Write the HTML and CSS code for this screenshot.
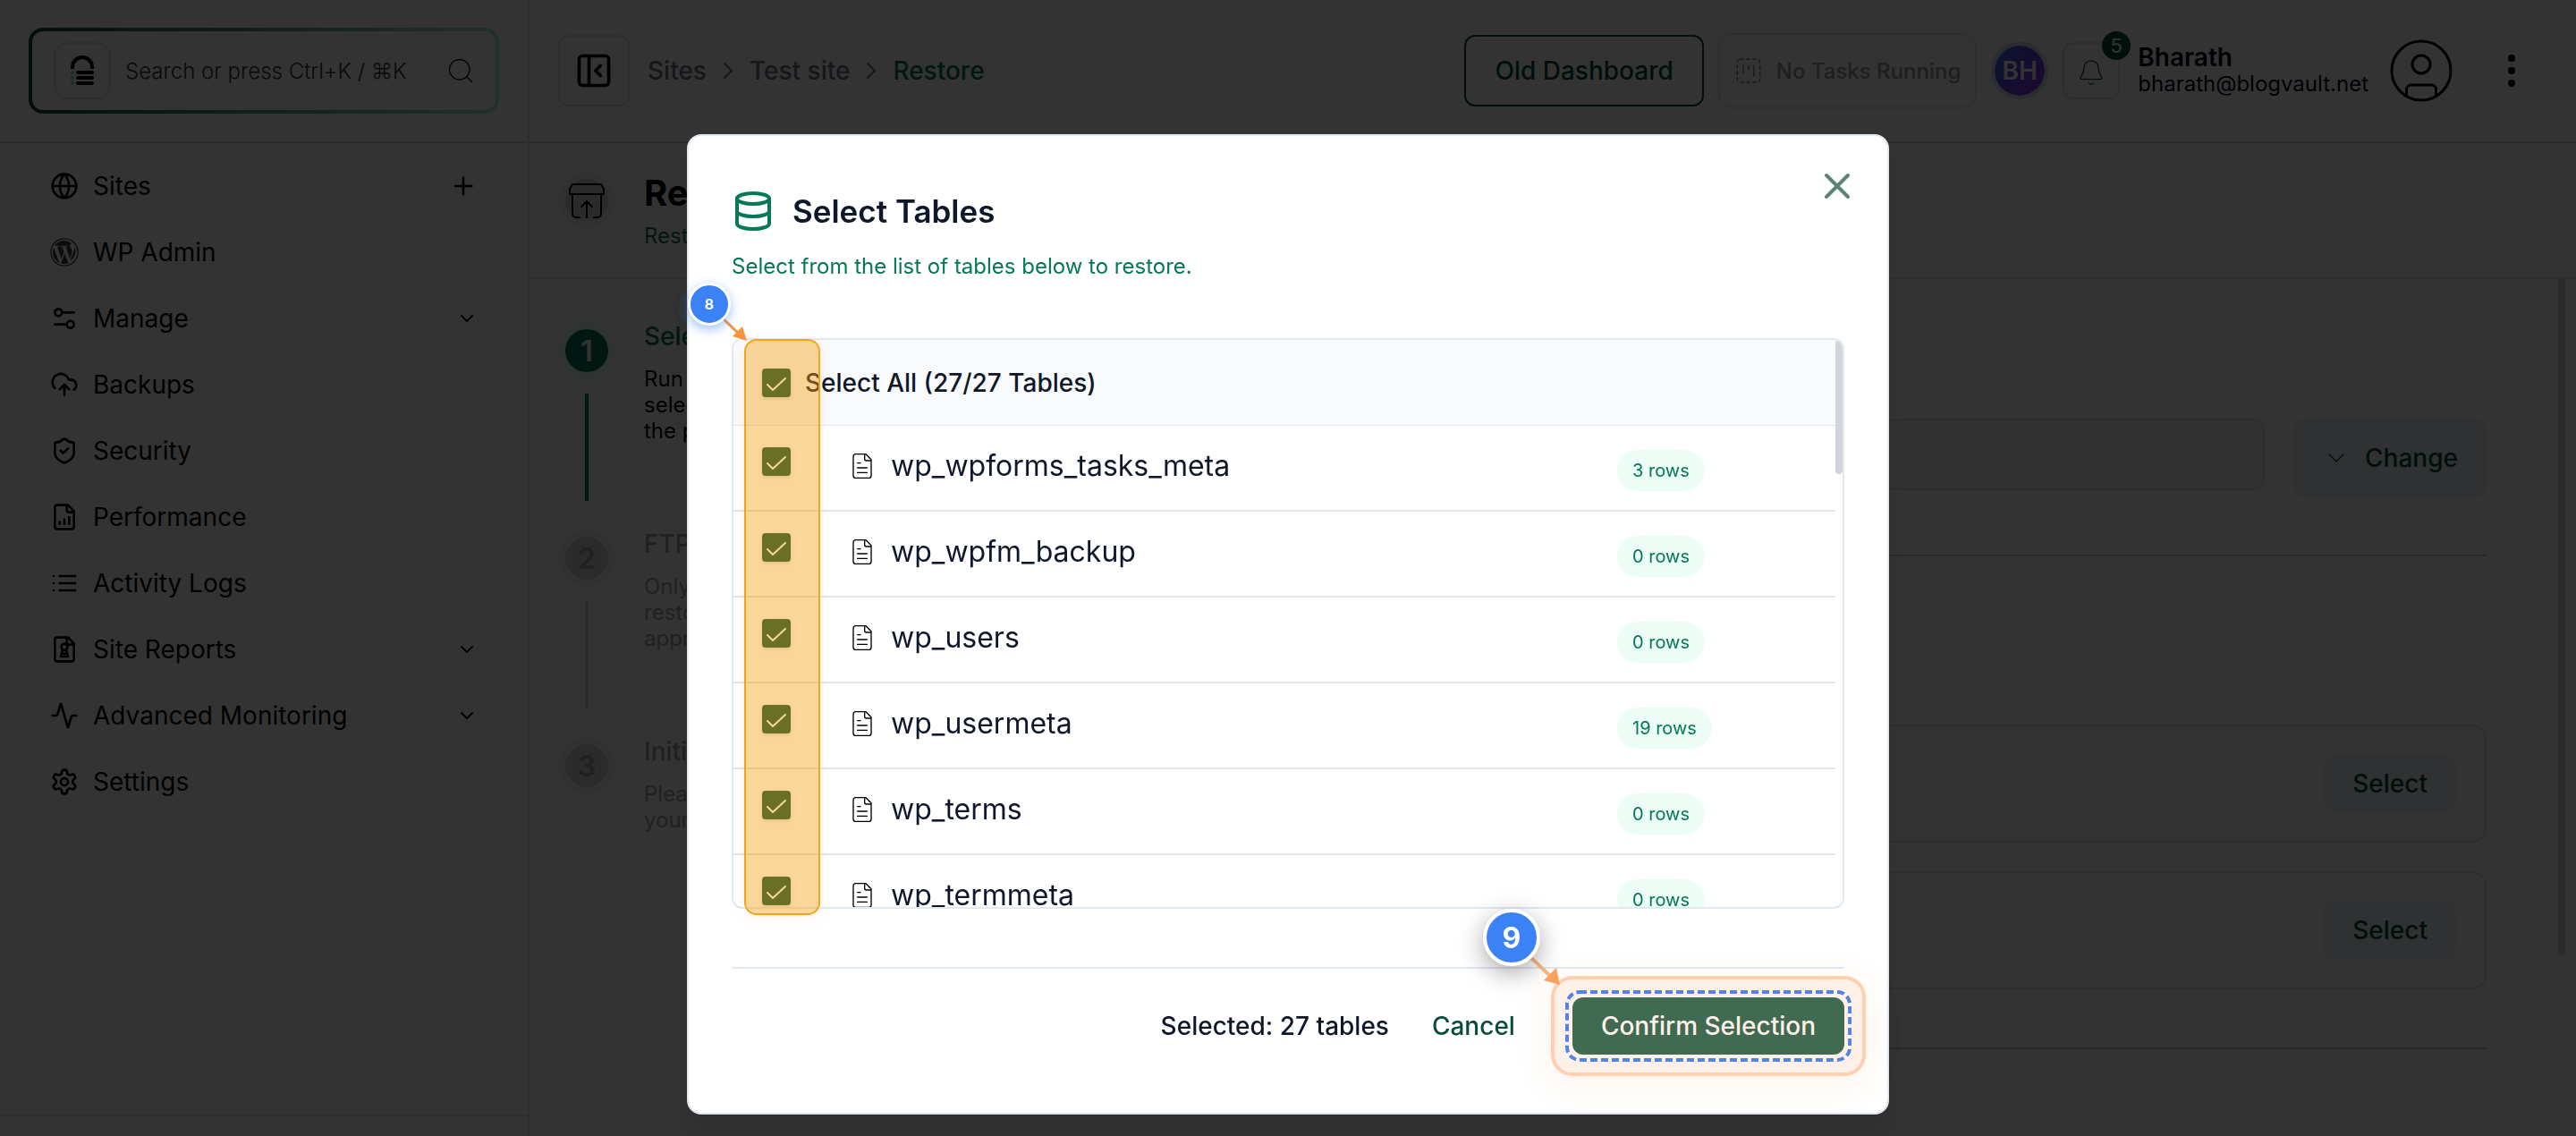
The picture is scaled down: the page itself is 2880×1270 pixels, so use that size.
FILE: index.html
```html
<!DOCTYPE html>
<html lang="en">
<head>
    <meta charset="UTF-8">
    <meta name="viewport" content="width=device-width, initial-scale=1.0">
    <title>Restore - Test site</title>
    <link rel="stylesheet" href="styles.css">
</head>
<body>

<!-- shared icons -->
<svg class="sprite" aria-hidden="true">
    <symbol id="i-down" viewBox="0 0 24 24"><path d="M6 9l6 6 6-6"/></symbol>
    <symbol id="i-right" viewBox="0 0 14 24"><path d="M3 4l8 8-8 8"/></symbol>
    <symbol id="i-file" viewBox="0 0 24 24"><path d="M15 2H6.500a2 2 0 0 0-2 2v16a2 2 0 0 0 2 2h11a2 2 0 0 0 2-2V6.500L15 2zM14 2v4a1.500 1.500 0 0 0 1.500 1.500h4M8 9.500h2.500M8 13.500h8M8 17.500h8"/></symbol>
</svg>

<div class="app">
    <aside class="sidebar">
        <div class="sidebar-top">
            <div class="search">
                <span class="search-logo">
                    <svg width="28" height="34" viewBox="0 0 28 34">
                        <path d="M3 15v-2a11 11 0 0 1 22 0v2" fill="none" stroke="#000" stroke-width="4"/>
                        <path d="M9 19h16M9 25h16M9 31h16" stroke="#000" stroke-width="4" stroke-linecap="round"/>
                        <path d="M3 19h0M3 25h0M3 31h0" stroke="#6ee7b7" stroke-width="4" stroke-linecap="round"/>
                    </svg>
                </span>
                <input type="text" class="search-input" aria-label="Search" placeholder="Search or press Ctrl+K / ⌘K">
                <svg class="icon search-icon" viewBox="0 0 24 24"><circle cx="11" cy="11" r="9"/><path d="M17.500 17.500L22 22"/></svg>
            </div>
        </div>
        <nav class="nav">
            <a href="#" class="nav-item">
                <svg class="icon" viewBox="0 0 24 24"><circle cx="12" cy="12" r="10"/><path d="M2 12h20M12 2a15 15 0 0 1 0 20a15 15 0 0 1 0-20"/></svg>
                <span>Sites</span>
                <svg class="icon nav-end" viewBox="0 0 24 24"><path d="M5 12h14M12 5v14"/></svg>
            </a>
            <a href="#" class="nav-item">
                <svg class="icon wp" viewBox="0 0 24 24"><circle cx="12" cy="12" r="11.300" fill="none" stroke="#404040" stroke-width="1"/><path fill="#404040" stroke="none" d="M12 2.200a9.800 9.800 0 0 0-8.200 4.400h.6c1 0 2.600-.1 2.600-.1.600 0 .6.700.1.800 0 0-.5.100-1.100.1l3.500 10.400 2.100-6.300-1.500-4.100c-.5 0-1-.1-1-.1-.5 0-.5-.8 0-.8 0 0 1.600.1 2.500.1 1 0 2.600-.1 2.600-.1.500 0 .6.700.1.800 0 0-.6.100-1.100.1l3.500 10.300 1-3.200c.4-1.300.7-2.300.7-3.100 0-1.200-.4-2-.8-2.700-.5-.8-1-1.500-1-2.300 0-.9.700-1.700 1.600-1.700A9.800 9.800 0 0 0 12 2.200zM2.200 12a9.800 9.800 0 0 0 5.500 8.800L3.100 8a9.800 9.800 0 0 0-.9 4zM12.200 12.900L9.200 21.400a9.800 9.800 0 0 0 6-.2zM20.600 7.300c0 1-.2 2-.7 3.300l-3 8.700A9.800 9.800 0 0 0 20.600 7.300z"/></svg>
                <span>WP Admin</span>
            </a>
            <a href="#" class="nav-item">
                <svg class="icon" viewBox="0 0 24 24"><circle cx="7" cy="7" r="3"/><path d="M10 7h10M4 17h10"/><circle cx="17" cy="17" r="3"/></svg>
                <span>Manage</span>
                <svg class="icon nav-end chevron"><use href="#i-down"/></svg>
            </a>
            <a href="#" class="nav-item">
                <svg class="icon" viewBox="0 0 24 24"><path d="M4 14.900A7 7 0 1 1 15.700 8h1.800a4.500 4.500 0 0 1 2.500 8.200M12 12v9M8 16l4-4 4 4"/></svg>
                <span>Backups</span>
            </a>
            <a href="#" class="nav-item">
                <svg class="icon" viewBox="0 0 24 24"><path d="M20 13c0 5-3.500 7.500-7.700 9a1 1 0 0 1-.6 0C7.500 20.500 4 18 4 13V6a1 1 0 0 1 1-1c2 0 4.500-1.200 6.200-2.700a1.200 1.200 0 0 1 1.600 0C14.500 3.800 17 5 19 5a1 1 0 0 1 1 1zM9 12l2 2 4-4"/></svg>
                <span>Security</span>
            </a>
            <a href="#" class="nav-item">
                <svg class="icon" viewBox="0 0 24 24"><path d="M15 2H6a2 2 0 0 0-2 2v16a2 2 0 0 0 2 2h12a2 2 0 0 0 2-2V7zM14 2v4a2 2 0 0 0 2 2h4M8 18v-2M12 18v-4M16 18v-6"/></svg>
                <span>Performance</span>
            </a>
            <a href="#" class="nav-item">
                <svg class="icon" viewBox="0 0 24 24"><path d="M8 6h13M8 12h13M8 18h13M3 6h.01M3 12h.01M3 18h.01"/></svg>
                <span>Activity Logs</span>
            </a>
            <a href="#" class="nav-item">
                <svg class="icon" viewBox="0 0 24 24"><path d="M15 2H6a2 2 0 0 0-2 2v16a2 2 0 0 0 2 2h12a2 2 0 0 0 2-2V7zM14 2v4a2 2 0 0 0 2 2h4"/><circle cx="12" cy="10" r="2.600"/><path d="M10.500 12.500L9 18h6l-1.500-5.500M10 15.500h4"/></svg>
                <span>Site Reports</span>
                <svg class="icon nav-end chevron"><use href="#i-down"/></svg>
            </a>
            <a href="#" class="nav-item">
                <svg class="icon" viewBox="0 0 24 24"><path d="M22 12h-2.500a2 2 0 0 0-1.900 1.500l-2.400 8.300a.25.25 0 0 1-.4 0L9.200 2.200a.25.25 0 0 0-.4 0l-2.400 8.300A2 2 0 0 1 4.500 12H2"/></svg>
                <span>Advanced Monitoring</span>
                <svg class="icon nav-end chevron"><use href="#i-down"/></svg>
            </a>
            <a href="#" class="nav-item">
                <svg class="icon" viewBox="0 0 24 24"><path d="M12.220 2h-.44a2 2 0 0 0-2 2v.18a2 2 0 0 1-1 1.730l-.43.25a2 2 0 0 1-2 0l-.15-.08a2 2 0 0 0-2.730.73l-.22.38a2 2 0 0 0 .73 2.730l.15.1a2 2 0 0 1 1 1.720v.51a2 2 0 0 1-1 1.740l-.15.09a2 2 0 0 0-.73 2.730l.22.38a2 2 0 0 0 2.730.73l.15-.08a2 2 0 0 1 2 0l.43.25a2 2 0 0 1 1 1.730V20a2 2 0 0 0 2 2h.44a2 2 0 0 0 2-2v-.18a2 2 0 0 1 1-1.730l.43-.25a2 2 0 0 1 2 0l.15.08a2 2 0 0 0 2.730-.73l.22-.39a2 2 0 0 0-.73-2.730l-.15-.08a2 2 0 0 1-1-1.740v-.5a2 2 0 0 1 1-1.740l.15-.09a2 2 0 0 0 .73-2.730l-.22-.38a2 2 0 0 0-2.730-.73l-.15.08a2 2 0 0 1-2 0l-.43-.25a2 2 0 0 1-1-1.730V4a2 2 0 0 0-2-2z"/><circle cx="12" cy="12" r="3"/></svg>
                <span>Settings</span>
            </a>
        </nav>
        <div class="sidebar-foot"></div>
    </aside>

    <main class="main">
        <header class="topbar">
            <button type="button" class="toggle" aria-label="Collapse sidebar">
                <svg class="icon" viewBox="0 0 24 24"><rect x="3" y="3" width="18" height="18" rx="2"/><path d="M9 3v18M16 15l-3-3 3-3"/></svg>
            </button>
            <nav class="crumbs">
                <a href="#">Sites</a>
                <svg class="icon"><use href="#i-right"/></svg>
                <a href="#">Test site</a>
                <svg class="icon"><use href="#i-right"/></svg>
                <a href="#" class="current">Restore</a>
            </nav>
            <button type="button" class="btn-outline">Old Dashboard</button>
            <div class="tasks">
                <svg class="icon" viewBox="0 0 24 24"><rect x="1" y="1" width="22" height="22" rx="3" stroke-dasharray="3 3"/><path d="M7 7v7M12 7v4M17 7v10"/></svg>
                <span>No Tasks Running</span>
            </div>
            <span class="initials">BH</span>
            <button type="button" class="bell" aria-label="Notifications">
                <svg class="icon" viewBox="0 0 24 24"><path d="M12 1.500c-4 0-6.500 3-6.500 7 0 5-3 6.500-3 8.500 0 .6.400 1 1 1h17c.6 0 1-.4 1-1 0-2-3-3.500-3-8.500 0-4-2.500-7-6.500-7zM10 21.500a2.500 2.500 0 0 0 4 0"/></svg>
                <span class="bell-count">5</span>
            </button>
            <div class="user">
                <strong>Bharath</strong>
                <span>bharath@blogvault.net</span>
            </div>
            <svg class="avatar" viewBox="0 0 70 70"><circle cx="35" cy="35" r="33"/><circle cx="35" cy="28" r="10"/><path d="M18.500 63v-7a5 5 0 0 1 5-5h23a5 5 0 0 1 5 5v7"/></svg>
            <button type="button" class="dots" aria-label="More">
                <svg width="8" height="36" viewBox="0 0 8 36"><circle cx="4" cy="4" r="4"/><circle cx="4" cy="18" r="4"/><circle cx="4" cy="32" r="4"/></svg>
            </button>
        </header>

        <section class="page-head">
            <span class="step-dot head-dot">
                <svg class="icon" viewBox="0 0 44 44"><path d="M6 4h32l3 5v6H3V9zM6 15v22a4 4 0 0 0 4 4h4M38 15v22a4 4 0 0 1-4 4h-4M22 41V23M16 29l6-6 6 6"/></svg>
            </span>
            <div>
                <h1>Restore</h1>
                <p>Restore your site</p>
            </div>
        </section>

        <div class="content">
            <ol class="steps">
                <li class="step active">
                    <span class="step-dot">1</span>
                    <div>
                        <h3>Select Tables</h3>
                        <p>Run a restore on<br>selected tables in<br>the process</p>
                    </div>
                </li>
                <li class="step">
                    <span class="step-dot">2</span>
                    <div>
                        <h3>FTP Details</h3>
                        <p>Only needed to<br>restore with the<br>appropriate access</p>
                    </div>
                </li>
                <li class="step">
                    <span class="step-dot">3</span>
                    <div>
                        <h3>Initiate Restore</h3>
                        <p>Please confirm<br>your choices</p>
                    </div>
                </li>
            </ol>
            <div class="panel">
                <div class="field-row">
                    <input type="text" class="field" aria-label="Restore point">
                    <button type="button" class="btn-soft btn-change"><svg class="icon"><use href="#i-down"/></svg>Change</button>
                </div>
                <div class="panel-cards">
                    <div class="card"><button type="button" class="btn-soft">Select</button></div>
                    <div class="card"><button type="button" class="btn-soft">Select</button></div>
                </div>
            </div>
            <div class="page-scroll"></div>
        </div>
    </main>
</div>

<div class="overlay">
    <div class="modal" role="dialog" aria-labelledby="modalTitle">
        <button type="button" class="close" aria-label="Close">
            <svg class="icon" viewBox="0 0 24 24"><path d="M6 6l12 12M18 6L6 18"/></svg>
        </button>
        <div class="modal-head">
            <svg class="icon" viewBox="0 0 24 24"><ellipse cx="12" cy="5" rx="9" ry="3"/><path d="M3 5v14a9 3 0 0 0 18 0V5M3 12a9 3 0 0 0 18 0"/></svg>
            <h2 id="modalTitle">Select Tables</h2>
        </div>
        <p class="modal-sub">Select from the list of tables below to restore.</p>

        <div class="list-wrap">
            <div class="list">
                <table>
                    <thead>
                        <tr>
                            <th class="check"><input type="checkbox" id="all" checked></th>
                            <th class="all" colspan="2"><label for="all">Select All (27/27 Tables)</label></th>
                        </tr>
                    </thead>
                    <tbody>
                        <tr>
                            <td class="check"><input type="checkbox" id="t1" checked></td>
                            <td><label for="t1" class="name"><svg class="icon"><use href="#i-file"/></svg>wp_wpforms_tasks_meta</label></td>
                            <td class="rows"><span>3 rows</span></td>
                        </tr>
                        <tr>
                            <td class="check"><input type="checkbox" id="t2" checked></td>
                            <td><label for="t2" class="name"><svg class="icon"><use href="#i-file"/></svg>wp_wpfm_backup</label></td>
                            <td class="rows"><span>0 rows</span></td>
                        </tr>
                        <tr>
                            <td class="check"><input type="checkbox" id="t3" checked></td>
                            <td><label for="t3" class="name"><svg class="icon"><use href="#i-file"/></svg>wp_users</label></td>
                            <td class="rows"><span>0 rows</span></td>
                        </tr>
                        <tr>
                            <td class="check"><input type="checkbox" id="t4" checked></td>
                            <td><label for="t4" class="name"><svg class="icon"><use href="#i-file"/></svg>wp_usermeta</label></td>
                            <td class="rows"><span>19 rows</span></td>
                        </tr>
                        <tr>
                            <td class="check"><input type="checkbox" id="t5" checked></td>
                            <td><label for="t5" class="name"><svg class="icon"><use href="#i-file"/></svg>wp_terms</label></td>
                            <td class="rows"><span>0 rows</span></td>
                        </tr>
                        <tr>
                            <td class="check"><input type="checkbox" id="t6" checked></td>
                            <td><label for="t6" class="name"><svg class="icon"><use href="#i-file"/></svg>wp_termmeta</label></td>
                            <td class="rows"><span>0 rows</span></td>
                        </tr>
                    </tbody>
                </table>
                <div class="list-scroll"></div>
            </div>
            <!-- marker 8: checkbox column -->
            <div class="mark-column"></div>
            <svg class="arrow arrow-8" viewBox="0 0 30 28"><path d="M1 1l20 19" stroke="#fb923c" stroke-width="3"/><path d="M29 27L13 22 24 11z" fill="#fb923c"/></svg>
            <span class="marker marker-8">8</span>
        </div>

        <div class="modal-foot">
            <span class="selected">Selected: 27 tables</span>
            <button type="button" class="btn-cancel">Cancel</button>
            <div class="confirm-wrap">
                <button type="button" class="btn-confirm">Confirm Selection</button>
                <!-- marker 9: confirm button -->
                <div class="mark-button"></div>
                <svg class="dashes"><rect x="2" y="2" rx="14"/></svg>
                <svg class="arrow arrow-9" viewBox="0 0 36 34"><path d="M1 1l22 21" stroke="#fdba85" stroke-width="4"/><path d="M35 33L17 28 31 14z" fill="#fda25f"/></svg>
                <span class="marker marker-9">9</span>
            </div>
        </div>
    </div>
</div>

</body>
</html>
```
FILE: styles.css
```css
* {
    box-sizing: border-box;
}
body {
    margin: 0;
    font-family: Inter, "Liberation Sans", sans-serif;
    font-size: 28px;
    color: #000;
    background: #fff;
    overflow: hidden;
}
button, input {
    font-family: inherit;
    font-size: inherit;
}
button {
    background: none;
    border: none;
    padding: 0;
}
a {
    color: inherit;
    text-decoration: none;
}
h1, h2, h3, p {
    margin: 0;
}
.sprite {
    display: none;
}
.icon {
    width: 32px;
    height: 32px;
    flex: none;
    fill: none;
    stroke: currentColor;
    stroke-width: 2;
    stroke-linecap: round;
    stroke-linejoin: round;
}

/* layout */
.app {
    display: flex;
    height: 100vh;
}
.main {
    flex: 1;
    display: flex;
    flex-direction: column;
}

/* sidebar */
.sidebar {
    width: 592px;
    flex: none;
    display: flex;
    flex-direction: column;
    border-right: 2px solid #e5e7eb;
}
.sidebar-top {
    height: 160px;
    padding: 31px 32px;
    border-bottom: 2px solid #d4d8de;
}
.search {
    display: flex;
    align-items: center;
    gap: 16px;
    height: 96px;
    padding: 0 24px;
    border: 4px solid transparent;
    border-radius: 16px;
    background: linear-gradient(#fff, #fff) padding-box, linear-gradient(90deg, #064e3b, #a7f3d0) border-box;
}
.search-logo {
    display: flex;
    align-items: center;
    justify-content: center;
    width: 64px;
    height: 64px;
    border: 2px solid #e5e7eb;
    border-radius: 16px;
}
.search-input {
    flex: 1;
    min-width: 0;
    padding: 0;
    border: none;
    background: none;
    font-size: 24px;
    font-weight: 300;
}
.search-input::placeholder {
    color: #333;
    opacity: 1;
}
.search-icon {
    width: 30px;
    height: 30px;
    stroke-width: 1;
}
.nav {
    flex: 1;
    padding: 11px 56px;
}
.nav-item {
    display: flex;
    align-items: center;
    gap: 16px;
    height: 74px;
}
.nav-end {
    margin-left: auto;
}
.nav-end.chevron {
    width: 24px;
    height: 24px;
}
.sidebar-foot {
    height: 24px;
    border-top: 2px solid #e5e7eb;
}

/* top bar */
.topbar {
    display: flex;
    align-items: center;
    height: 160px;
    padding: 0 54px 0 32px;
    border-bottom: 2px solid #d4d8de;
}
.toggle {
    width: 80px;
    height: 80px;
    border: 2px solid #e5e7eb;
    border-radius: 12px;
}
.toggle .icon {
    width: 44px;
    height: 44px;
    vertical-align: middle;
}
.crumbs {
    display: flex;
    align-items: center;
    gap: 17px;
    margin: 0 auto 0 20px;
    font-weight: 500;
    color: #6b7280;
}
.crumbs .icon {
    width: 14px;
    height: 24px;
}
.crumbs .current {
    color: #047857;
}
.btn-outline {
    height: 80px;
    padding: 0 32px;
    border: 2px solid #064e3b;
    border-radius: 12px;
    font-weight: 500;
    color: #064e3b;
}
.tasks {
    display: flex;
    align-items: center;
    gap: 17px;
    height: 84px;
    margin: 0 16px;
    padding: 0 16px 0 18px;
    border: 2px solid #ececec;
    border-radius: 16px;
    font-size: 24px;
    font-weight: 500;
    color: #999;
}
.tasks .icon {
    width: 28px;
    height: 28px;
    color: #666;
    stroke-width: 1;
}
.initials {
    display: flex;
    align-items: center;
    justify-content: center;
    width: 64px;
    height: 64px;
    border: 4px solid #d6dbe3;
    border-radius: 50%;
    background: linear-gradient(135deg, #3b82f6, #4f46e5 40%, #9333ea) padding-box;
    font-weight: 600;
    color: #fff;
}
.bell {
    position: relative;
    width: 64px;
    height: 64px;
    margin: 0 20px 0 16px;
    border: 2px solid #e5e7eb;
    border-radius: 12px;
    color: #064e3b;
}
.bell .icon {
    width: 30px;
    height: 30px;
    vertical-align: middle;
    stroke-width: 1;
}
.bell-count {
    position: absolute;
    top: -14px;
    right: -14px;
    width: 32px;
    height: 32px;
    border-radius: 50%;
    background: #064e3b;
    font-size: 22px;
    line-height: 32px;
    color: #fff;
}
.user {
    display: flex;
    flex-direction: column;
    font-size: 24px;
    line-height: 30px;
    color: #020617;
}
.user strong {
    font-size: 28px;
    font-weight: 600;
}
.avatar {
    width: 70px;
    height: 70px;
    margin: 0 48px 0 24px;
    fill: none;
    stroke: #000;
    stroke-width: 3;
}
.dots {
    width: 36px;
    line-height: 0;
}

/* page head */
.page-head {
    display: flex;
    gap: 40px;
    height: 152px;
    padding: 32px 40px;
    border-bottom: 2px solid #e5e7eb;
}
.page-head h1 {
    font-size: 40px;
    line-height: 48px;
}
.page-head p {
    font-size: 24px;
    line-height: 48px;
    color: #047857;
}
.step-dot {
    display: flex;
    align-items: center;
    justify-content: center;
    flex: none;
    width: 48px;
    height: 48px;
    border-radius: 50%;
    background: #d4d4d4;
    box-shadow: 0 0 0 8px #f5f5f5;
    font-size: 32px;
    font-weight: 600;
}
.head-dot {
    margin-top: 8px;
}
.head-dot .icon {
    width: 44px;
    height: 44px;
}

/* steps */
.content {
    display: flex;
    flex: 1;
}
.steps {
    width: 500px;
    margin: 0;
    padding: 56px 40px;
    list-style: none;
}
.step {
    display: grid;
    grid-template-columns: 48px 1fr;
    gap: 40px;
    height: 232px;
    color: #a3a3a3;
}
.step:not(:last-child) {
    background: linear-gradient(#d4d4d4, #d4d4d4) 22px 72px / 4px 120px no-repeat;
}
.step.active {
    color: #000;
    background-image: linear-gradient(#047857, #047857);
}
.step.active .step-dot {
    background: #047857;
    box-shadow: 0 0 0 8px #ecfdf5;
    color: #fff;
}
.step h3 {
    margin: -8px 0 17px;
    font-size: 28px;
    line-height: 32px;
    font-weight: 500;
}
.step.active h3 {
    color: #047857;
}
.step p {
    font-size: 24px;
    line-height: 29px;
    white-space: nowrap;
}

/* restore panel */
.panel {
    flex: 1;
    padding-top: 156px;
}
.field-row {
    display: flex;
    align-items: flex-start;
    gap: 32px;
    padding-bottom: 64px;
    border-bottom: 2px solid #d4d4d4;
}
.field {
    flex: 1;
    height: 80px;
    border: 2px solid #e5e7eb;
    border-radius: 12px;
    background: #fafafa;
}
.btn-soft {
    height: 64px;
    padding: 0 32px;
    border-radius: 12px;
    background: #f1f5f9;
    font-weight: 500;
    color: #064e3b;
}
.btn-change {
    display: flex;
    align-items: center;
    gap: 16px;
    height: 88px;
}
.btn-change .icon {
    stroke-width: 1;
}
.panel-cards {
    display: grid;
    gap: 32px;
    padding: 188px 0 65px;
    border-bottom: 2px solid #d4d4d4;
}
.card {
    display: flex;
    align-items: center;
    justify-content: flex-end;
    height: 132px;
    padding: 0 32px;
    border: 2px solid #e5e7eb;
    border-radius: 16px;
}
.page-scroll {
    width: 8px;
    height: 756px;
    margin: 0 12px 0 80px;
    border-radius: 4px;
    background: #d1d5db;
}

/* modal */
.overlay {
    position: fixed;
    inset: 0;
    display: flex;
    align-items: flex-start;
    justify-content: center;
    padding-top: 150px;
    background: rgba(0, 0, 0, 0.8);
}
.modal {
    position: relative;
    width: 100%;
    max-width: 1344px;
    padding: 60px 48px 65px;
    border: 2px solid #e2e8f0;
    border-radius: 16px;
    background: #fff;
    box-shadow: 0 20px 30px rgba(0, 0, 0, 0.1);
    color: #0f172a;
}
.close {
    position: absolute;
    top: 32px;
    right: 32px;
    line-height: 0;
    color: #5b8374;
}
.close .icon {
    width: 48px;
    height: 48px;
}
.modal-head {
    display: flex;
    align-items: center;
    gap: 20px;
}
.modal-head .icon {
    width: 48px;
    height: 48px;
    color: #047857;
}
.modal-head h2 {
    font-size: 35px;
    line-height: 48px;
    font-weight: 600;
}
.modal-sub {
    margin: 20px 0 62px;
    font-size: 24px;
    line-height: 36px;
    color: #047857;
}
.list-wrap {
    position: relative;
}
.list {
    display: flex;
    align-items: flex-start;
    height: 638px;
    border: 2px solid #e2e8f0;
    border-radius: 12px;
    overflow: hidden;
}
.list table {
    flex: 1;
    border-spacing: 0;
}
.list th, .list td {
    height: 96px;
    padding: 0;
    text-align: left;
    border-bottom: 2px solid #e5e5e5;
}
.list th {
    border-bottom: 1px solid #e2e8f0;
    background: #f8fafc;
    font-weight: 500;
}
.list .check {
    width: 80px;
    padding: 24px 0 0 32px;
    vertical-align: top;
    line-height: 0;
}
.list th.check {
    padding-top: 32px;
}
.check input {
    appearance: none;
    width: 32px;
    height: 32px;
    margin: 0;
    border-radius: 4px;
    background: #064e3b url("data:image/svg+xml,%3Csvg xmlns='http://www.w3.org/2000/svg' viewBox='0 0 32 32' fill='none' stroke='%23fff' stroke-width='2' stroke-linecap='round' stroke-linejoin='round'%3E%3Cpath d='M6 18l6 6L26 11'/%3E%3C/svg%3E");
    box-shadow: 0 2px 4px rgba(0, 0, 0, 0.15);
}
.name {
    display: flex;
    align-items: center;
    gap: 16px;
    padding: 0 0 4px 48px;
    font-size: 32px;
    line-height: 32px;
}
.name .icon {
    color: #000;
    stroke-width: 1;
}
.list .rows {
    width: 244px;
    padding-top: 6px;
}
.rows span {
    display: inline-block;
    padding: 0 17px;
    border-radius: 23px;
    background: #ecfdf5;
    font-size: 20px;
    line-height: 46px;
    color: #047857;
    vertical-align: middle;
}
.list-scroll {
    width: 8px;
    height: 150px;
    border-radius: 4px;
    background: #d1d5db;
}
.modal-foot {
    display: flex;
    align-items: center;
    justify-content: flex-end;
    margin-top: 65px;
    padding-top: 32px;
    border-top: 2px solid #e2e8f0;
    font-weight: 500;
}
.btn-cancel {
    margin: 0 32px 0 16px;
    padding: 0 32px;
    font-weight: 500;
    color: #064e3b;
}
.confirm-wrap {
    position: relative;
}
.btn-confirm {
    display: block;
    height: 64px;
    padding: 0 32px;
    border-radius: 12px;
    background: #064e3b;
    font-weight: 500;
    color: #fff;
}

/* numbered markers */
.mark-column {
    position: absolute;
    top: 1px;
    left: 14px;
    width: 85px;
    height: 644px;
    border: 2px solid #f3a31c;
    border-radius: 14px;
    background: rgba(245, 158, 11, 0.42);
    background-clip: padding-box;
    box-shadow: 0 4px 16px rgba(249, 115, 22, 0.08);
}
.mark-button {
    position: absolute;
    inset: -24px;
    border: 4px solid #ffcfae;
    border-radius: 24px;
    background: rgba(255, 196, 158, 0.24) padding-box;
    box-shadow: 0 8px 40px rgba(251, 146, 60, 0.12);
}
.dashes {
    position: absolute;
    top: -8px;
    left: -8px;
    width: calc(100% + 16px);
    height: calc(100% + 16px);
}
.dashes rect {
    width: calc(100% - 4px);
    height: calc(100% - 4px);
    fill: none;
    stroke: #4f84e8;
    stroke-width: 4;
    stroke-dasharray: 8 4;
}
.marker {
    position: absolute;
    display: flex;
    align-items: center;
    justify-content: center;
    border-radius: 50%;
    background: #3b82f6;
    font-weight: 700;
    color: #fff;
}
.marker-8 {
    top: -62px;
    left: -49px;
    width: 48px;
    height: 48px;
    border: 3px solid #fff;
    box-shadow: 0 4px 12px rgba(59, 130, 246, 0.5);
    font-size: 16px;
}
.marker-9 {
    top: -99px;
    left: -100px;
    width: 64px;
    height: 64px;
    border: 4px solid #fff;
    box-shadow: 0 8px 28px rgba(0, 0, 0, 0.35);
    font-size: 32px;
}
.arrow {
    position: absolute;
    fill: none;
}
.arrow-8 {
    top: -24px;
    left: -12px;
    width: 30px;
    height: 28px;
}
.arrow-9 {
    top: -47px;
    left: -49px;
    width: 36px;
    height: 34px;
}
```
